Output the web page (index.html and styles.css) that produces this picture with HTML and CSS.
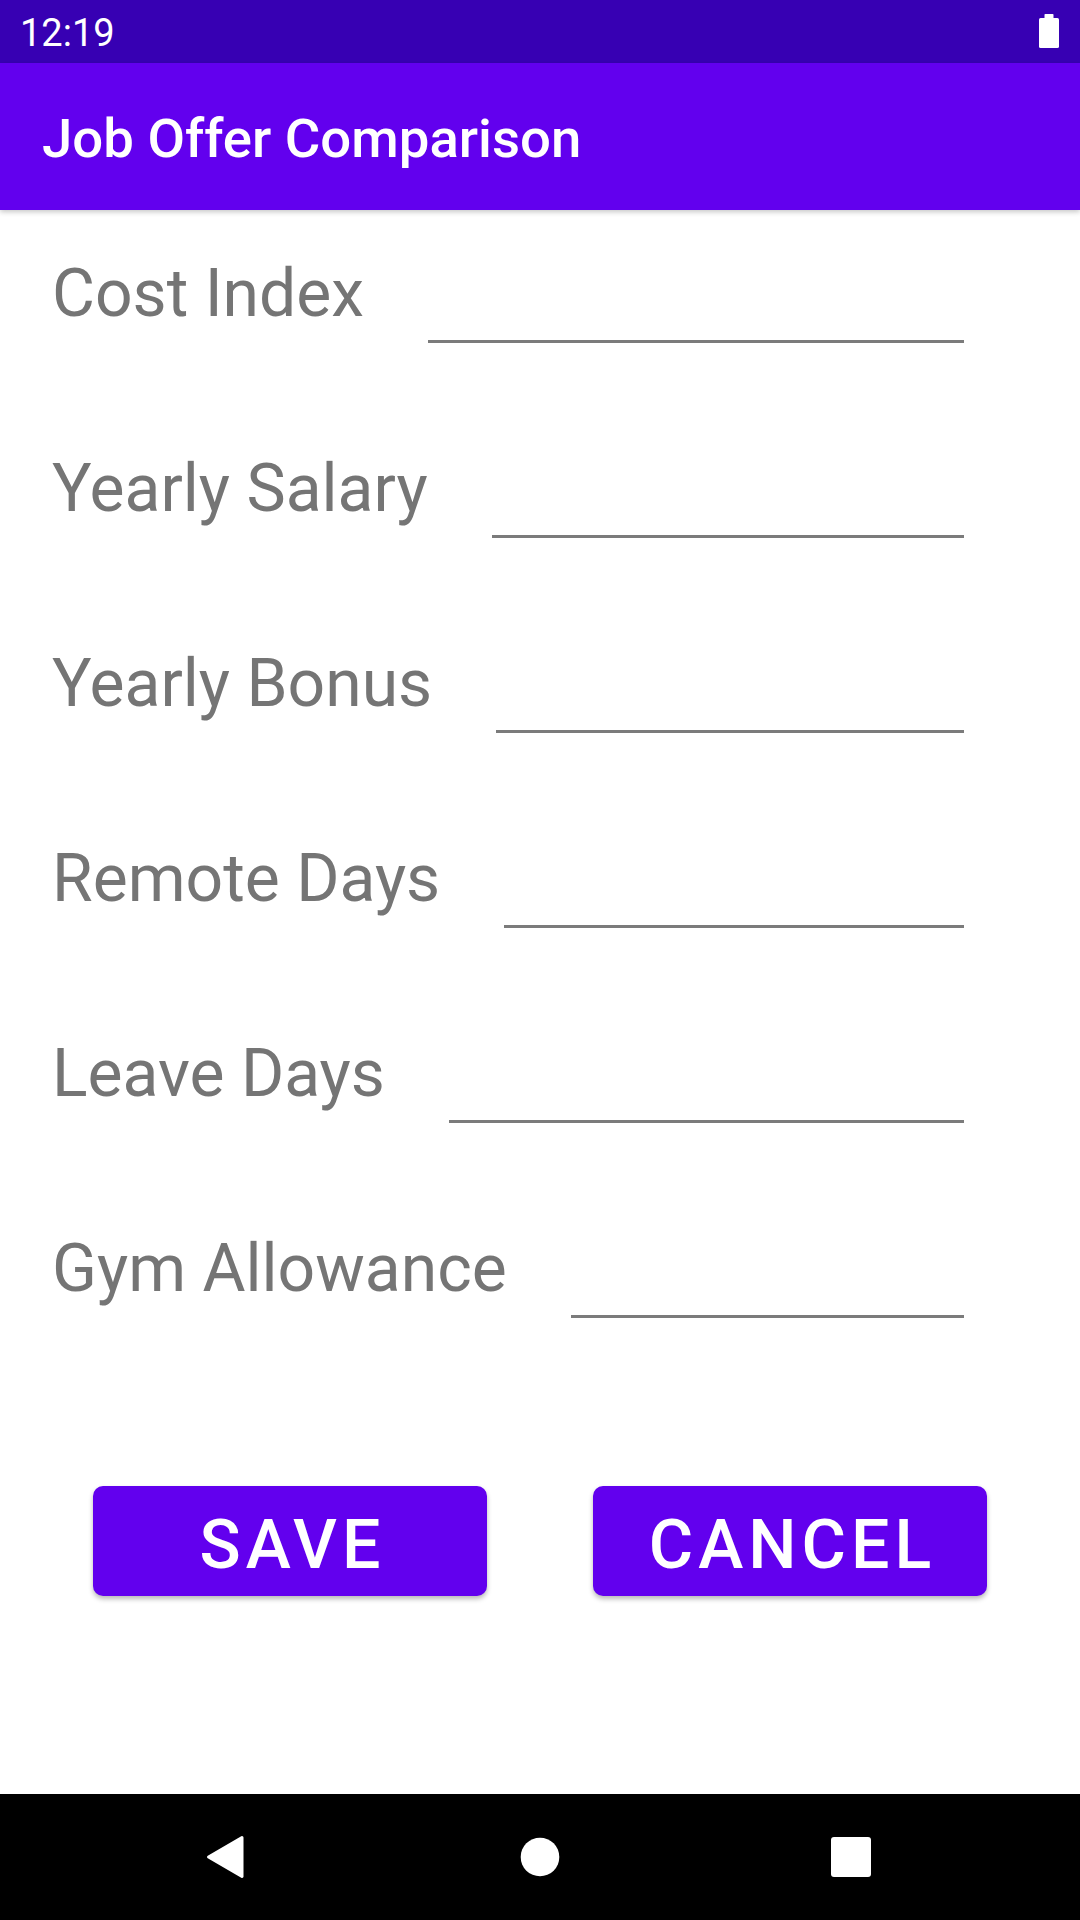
FILE: index.html
```html
<!DOCTYPE html>
<html lang="en">
<head>
<meta charset="utf-8">
<title>Job Offer Comparison</title>
<link rel="stylesheet" href="styles.css">
</head>
<body>
<div class="screen">
  <div class="status-bar">
    <span class="time">12:19</span>
    <svg class="battery" width="20" height="34" viewBox="0 0 20 34" aria-hidden="true">
      <rect x="5.5" y="0" width="9" height="5" rx="0.8" fill="#fff"/>
      <rect x="0" y="4" width="20" height="30" rx="1.6" fill="#fff"/>
    </svg>
  </div>
  <header class="app-bar">
    <h1 class="title">Job Offer Comparison</h1>
  </header>
  <main class="content">
    <form class="form">
      <div class="field"><label class="label">Cost Index</label><input class="input" type="text"></div>
      <div class="field"><label class="label">Yearly Salary</label><input class="input" type="text"></div>
      <div class="field"><label class="label">Yearly Bonus</label><input class="input" type="text"></div>
      <div class="field"><label class="label">Remote Days</label><input class="input" type="text"></div>
      <div class="field"><label class="label">Leave Days</label><input class="input" type="text"></div>
      <div class="field"><label class="label">Gym Allowance</label><input class="input" type="text"></div>
    </form>
    <div class="actions">
      <button class="btn" type="button">SAVE</button>
      <button class="btn" type="button">CANCEL</button>
    </div>
  </main>
  <nav class="nav-bar">
    <svg class="nav-icons" width="1080" height="126" viewBox="0 0 1080 126" aria-hidden="true">
      <path d="M242 43.5 L208.5 63 L242 82.5 Z" fill="#fff" stroke="#fff" stroke-width="3" stroke-linejoin="round"/>
      <circle cx="540" cy="63" r="19.3" fill="#fff"/>
      <rect x="831" y="43" width="40" height="40" rx="3" fill="#fff"/>
    </svg>
  </nav>
</div>
</body>
</html>
```
FILE: styles.css
```css
* { box-sizing: border-box; }
html, body { margin: 0; padding: 0; }
body {
  width: 1080px;
  height: 1920px;
  background: #ffffff;
  font-family: Roboto, "Noto Sans", "Liberation Sans", sans-serif;
  overflow: hidden;
}
.screen {
  width: 1080px;
  height: 1920px;
  display: flex;
  flex-direction: column;
}
.status-bar {
  height: 63px;
  flex: 0 0 63px;
  background: #3700B3;
  display: flex;
  justify-content: space-between;
  align-items: flex-start;
  padding: 0 21px 0 20px;
  color: #fff;
}
.time {
  margin-top: 11px;
  font-size: 38px;
  line-height: 44px;
  font-weight: 400;
}
.battery {
  margin-top: 14px;
  display: block;
}
.app-bar {
  position: relative;
  z-index: 2;
  height: 147px;
  flex: 0 0 147px;
  background: #6200EE;
  padding: 43px 42px 0 42px;
  box-shadow: 0 2px 5px rgba(0,0,0,0.22);
}
.title {
  margin: 0;
  color: #fff;
  font-size: 54.5px;
  line-height: 64px;
  font-weight: 500;
  letter-spacing: 0;
}
.content {
  flex: 1 1 auto;
  padding-top: 44px;
  display: flex;
  flex-direction: column;
}
.form {
  display: flex;
  flex-direction: column;
  gap: 106px;
  padding: 0 116px 0 52px;
  margin: 0;
}
.field {
  display: flex;
  align-items: flex-start;
  height: 89px;
}
.label {
  font-size: 66px;
  line-height: 80px;
  color: #757575;
  white-space: nowrap;
}
.input {
  flex: 1 1 auto;
  min-width: 0;
  margin: 0 0 0 64px;
  height: 89px;
  padding: 0;
  border: 0;
  border-bottom: 3px solid #7b7b7b;
  background: transparent;
  outline: none;
  font-family: inherit;
  font-size: 66px;
  color: #222;
  -webkit-appearance: none;
  appearance: none;
  border-radius: 0;
}
.actions {
  margin-top: 168px;
  padding: 0 93px;
  display: flex;
  justify-content: space-between;
}
.btn {
  width: 394px;
  height: 110px;
  border: 0;
  border-radius: 10px;
  background: #6200EE;
  color: #fff;
  font-family: inherit;
  font-size: 68px;
  font-weight: 500;
  letter-spacing: 5px;
  line-height: 80px;
  padding: 7px 0 0 5px;
  display: flex;
  align-items: center;
  justify-content: center;
  box-shadow: 0 3px 5px rgba(0,0,0,0.28);
}
.nav-bar {
  height: 126px;
  flex: 0 0 126px;
  background: #000;
}
.nav-icons { display: block; }
```
